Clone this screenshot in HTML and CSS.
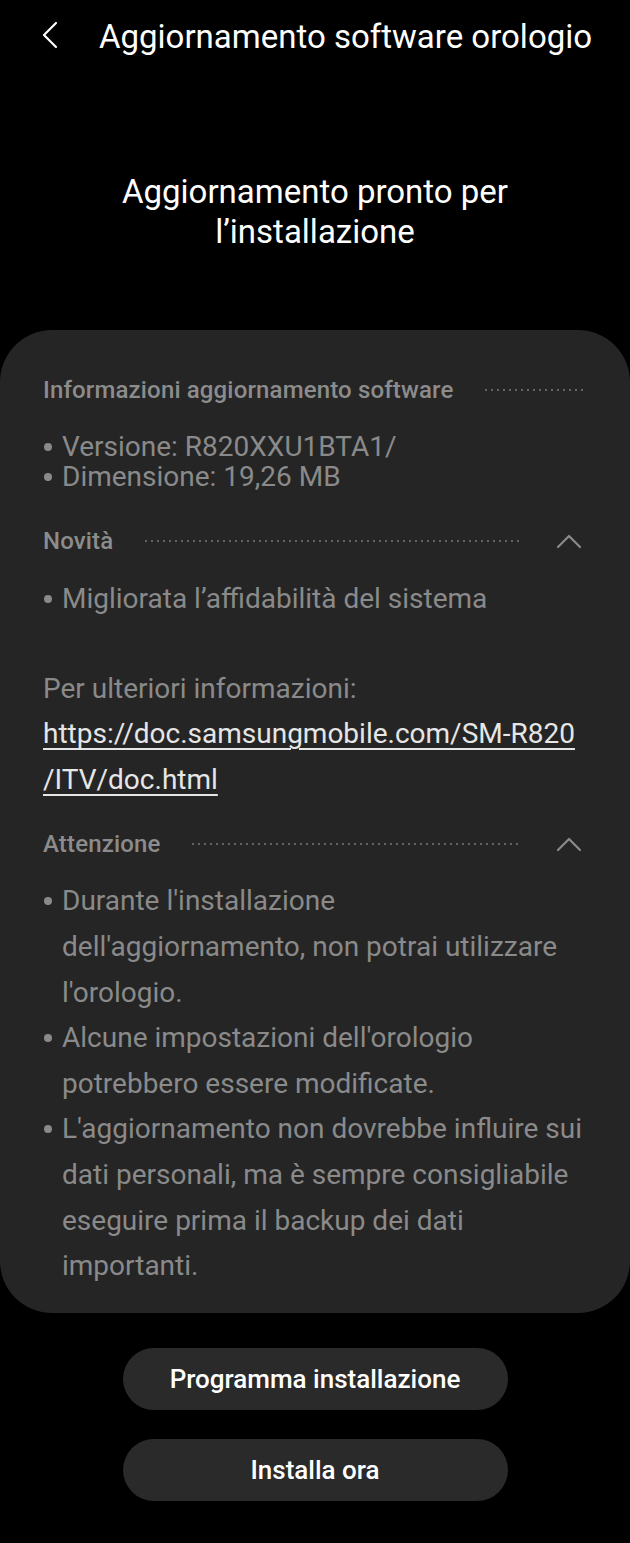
FILE: index.html
```html
<!DOCTYPE html>
<html lang="it">
<head>
<meta charset="utf-8">
<link rel="stylesheet" href="styles.css">
</head>
<body>
<header class="topbar">
  <svg class="back" width="18" height="28" viewBox="0 0 18 28"><path d="M15 2 L3 14 L15 26" fill="none" stroke="#fff" stroke-width="2.2" stroke-linecap="round" stroke-linejoin="round"/></svg>
  <h1 class="title">Aggiornamento software orologio</h1>
</header>
<h2 class="status">Aggiornamento pronto per<br>l’installazione</h2>
<main class="card">
  <div class="sec-head">
    <span class="sec-title">Informazioni aggiornamento software</span>
    <span class="dots"></span>
  </div>
  <ul class="list tight">
    <li><span class="b"></span><span>Versione: R820XXU1BTA1/</span></li>
    <li><span class="b"></span><span>Dimensione: 19,26 MB</span></li>
  </ul>
  <div class="sec-head gap-novita">
    <span class="sec-title">Novità</span>
    <span class="dots"></span>
    <span class="chev"><svg width="26" height="16" viewBox="0 0 26 16"><path d="M2 14 L13 3 L24 14" fill="none" stroke="#8a8a8a" stroke-width="2.2" stroke-linecap="round" stroke-linejoin="round"/></svg></span>
  </div>
  <ul class="list loose">
    <li><span class="b"></span><span>Migliorata l’affidabilità del sistema</span></li>
  </ul>
  <div class="more">
    <p class="more-label">Per ulteriori informazioni:</p>
    <a class="link">https://doc.samsungmobile.com/SM-R820<br>/ITV/doc.html</a>
  </div>
  <div class="sec-head gap-att">
    <span class="sec-title">Attenzione</span>
    <span class="dots"></span>
    <span class="chev"><svg width="26" height="16" viewBox="0 0 26 16"><path d="M2 14 L13 3 L24 14" fill="none" stroke="#8a8a8a" stroke-width="2.2" stroke-linecap="round" stroke-linejoin="round"/></svg></span>
  </div>
  <ul class="list loose">
    <li><span class="b"></span><span>Durante l'installazione<br>dell'aggiornamento, non potrai utilizzare<br>l'orologio.</span></li>
    <li><span class="b"></span><span>Alcune impostazioni dell'orologio<br>potrebbero essere modificate.</span></li>
    <li><span class="b"></span><span>L'aggiornamento non dovrebbe influire sui<br>dati personali, ma è sempre consigliabile<br>eseguire prima il backup dei dati<br>importanti.</span></li>
  </ul>
</main>
<div class="actions">
  <button class="btn">Programma installazione</button>
  <button class="btn">Installa ora</button>
</div>
</body>
</html>
```
FILE: styles.css
```css
html, body {
  margin: 0;
  padding: 0;
  background: #000;
}
body {
  width: 630px;
  height: 1543px;
  overflow: hidden;
  font-family: Roboto, "Noto Sans", sans-serif;
  color: #fff;
}
.topbar {
  display: flex;
  align-items: center;
  height: 72px;
  padding-left: 41px;
}
.back {
  display: block;
  margin-top: -2px;
}
.title {
  margin: 0 0 0 40px;
  font-size: 33px;
  font-weight: 400;
  white-space: nowrap;
}
.status {
  margin: 100px 0 0;
  text-align: center;
  font-size: 33px;
  font-weight: 400;
  line-height: 40px;
}
.card {
  margin-top: 78px;
  background: #252525;
  border-radius: 52px;
  padding: 42px 20px 24px 43px;
  color: #8a8a8a;
}
.sec-head {
  display: flex;
  align-items: center;
  height: 36px;
  margin-right: 26px;
}
.sec-title {
  font-size: 24px;
  font-weight: 500;
  color: #8c8c8c;
  white-space: nowrap;
  letter-spacing: 0.15px;
}
.dots {
  flex: 1;
  height: 2px;
  margin-left: 30px;
  background-image: radial-gradient(circle, #636363 0.9px, transparent 1.2px);
  background-size: 6px 2px;
  background-repeat: repeat-x;
}
.chev {
  width: 63px;
  display: flex;
  justify-content: flex-end;
  margin-right: 2px;
}
.chev svg { display: block; }
.list {
  list-style: none;
  margin: 0;
  padding: 0;
  font-size: 28px;
  white-space: nowrap;
}
.list li {
  display: flex;
}
.b {
  width: 19px;
  flex: none;
  position: relative;
}
.b::before {
  content: "";
  position: absolute;
  left: 1px;
  top: calc(50% - 4px);
  width: 8px;
  height: 8px;
  border-radius: 50%;
  background: #8a8a8a;
}
.tight {
  line-height: 30px;
  margin-top: 24px;
}
.tight .b::before { top: 11px; }
.loose {
  line-height: 45.6px;
}
.loose .b::before { top: 19px; }
.gap-novita { margin-top: 31px; }
.gap-novita + .loose { margin-top: 17px; }
.more {
  margin-top: 44px;
  font-size: 28px;
  line-height: 45.6px;
}
.more-label {
  margin: 0;
}
.link {
  color: #e6e6e6;
  text-decoration: underline;
  text-underline-offset: 5px;
  text-decoration-thickness: 1.5px;
}
.gap-att { margin-top: 24px; }
.gap-att + .loose { margin-top: 16px; }
.actions {
  display: flex;
  flex-direction: column;
  align-items: center;
  gap: 29px;
  margin-top: 35px;
}
.btn {
  width: 385px;
  height: 62px;
  border: none;
  border-radius: 31px;
  background: #2a2a2a;
  color: #fff;
  font-family: Roboto, "Noto Sans", sans-serif;
  font-size: 26px;
  font-weight: 500;
}
```
